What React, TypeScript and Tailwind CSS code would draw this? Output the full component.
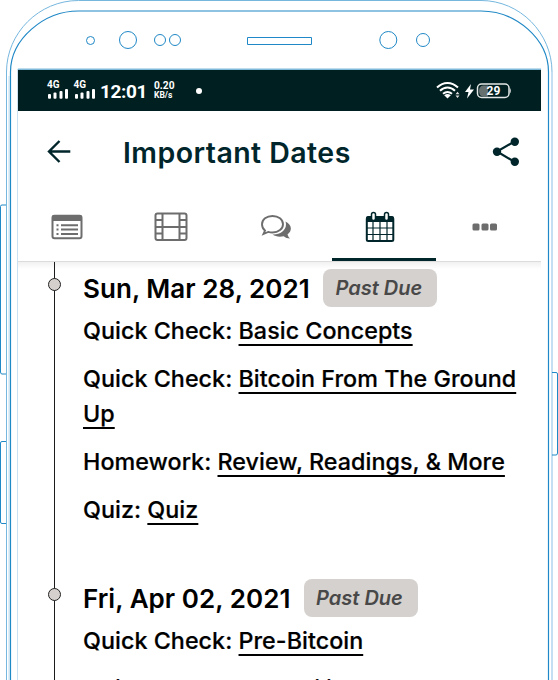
const INK = "#00262b";

function Frame() {
  return (
    <svg className="pointer-events-none absolute inset-0" width="558" height="680" viewBox="0 0 558 680" fill="none">
      <path d="M6.500 680V72C6.500 33 39 .5 78.500 .5H481C520 .5 552 33 552 72V680" stroke="#76b7de" />
      <path d="M552 72V680" stroke="#c3dff1" strokeWidth="2" />
      <path d="M9 680V76" stroke="#c3dff1" />
      <path d="M10.500 680V72C10.500 39 44 11 78.500 11H481C516 11 548.500 39 548.500 72V680" stroke="#1f88c6" strokeWidth="1.200" />
      <path d="M17.500 680V69" stroke="#c9e1f1" />
      <path d="M18 69.200H541" stroke="#7fb9da" strokeWidth="1.500" />
      <g stroke="#1f88c6" strokeWidth="1">
        <circle cx="90.500" cy="40.500" r="4" />
        <circle cx="128" cy="40" r="8.500" />
        <circle cx="160" cy="40" r="5.500" />
        <circle cx="175" cy="40" r="5.500" />
        <path d="M247.500 37.500H311.500V44.500H247.500Z" />
        <circle cx="388.300" cy="40" r="8.500" />
        <circle cx="423" cy="40" r="6.500" />
        <path d="M6 205H2Q.5 205 .5 206.500V372Q.5 374 2 374H6M6 441.500H2Q.5 441.500 .5 443V522Q.5 523.500 2 523.500H6M552 372.500H556Q557.500 372.500 557.500 374V453Q557.500 455 556 455H552" />
      </g>
    </svg>
  );
}

function Signal() {
  return (
    <div className="-mt-[2px] flex w-[26.500px] flex-col font-[Roboto]">
      <span className="h-[8px] text-[10px] font-bold leading-[8px]">4G</span>
      <svg width="22" height="10" viewBox="0 0 22 10" fill="#fff">
        <rect x="1" y="5" width="3" height="4.700" rx="1" />
        <rect x="6.500" y="3.500" width="3" height="6.200" rx="1" />
        <rect x="12.500" y="2" width="3" height="7.700" rx="1" />
        <rect x="18" y="0" width="3" height="9.700" rx="1" />
      </svg>
    </div>
  );
}

function StatusBar() {
  return (
    <div className="flex h-[41px] items-center bg-[#001f20] pl-[29px] text-white">
      <Signal />
      <Signal />
      <span className="w-[54px] whitespace-nowrap pt-[2px] font-[Roboto] text-[19px] font-bold leading-none tracking-[-0.4px]">12:01</span>
      <div className="flex w-[20px] flex-col font-[Roboto] font-bold">
        <span className="text-[10.200px] leading-[10px]">0.20</span>
        <span className="text-[8.500px] leading-[9px]">KB/s</span>
      </div>
      <span className="ml-[22px] size-[6px] rounded-full bg-white" />
      <svg className="ml-auto mr-[29px]" width="76" height="20" viewBox="0 0 76 20" fill="none" stroke="#fff">
        <path d="M1 6.500C7.500.5 15.500.5 22 6.500M4 9.800C8.500 5.500 14.500 5.500 19 9.800M7 12.800C10 10.300 13 10.300 16 12.800" strokeWidth="2" />
        <path d="M8.200 14.300Q11.500 11.800 14.800 14.300L11.500 17.500Z" fill="#fff" stroke="none" />
        <path d="M19.500 13.200L21.500 10.800L23.500 13.200ZM19.500 14.500H23.500L21.500 17Z" fill="#ddd" stroke="none" />
        <path d="M35 3L29 11H32.500L31 17.500L38 8.500H34Z" fill="#fff" stroke="none" />
        <path d="M47 4.500H52V15.500H47Q43 15 43 10Q43 5 47 4.500Z" fill="#65706f" stroke="none" />
        <rect x="41.500" y="3" width="31.500" height="13.500" rx="4" strokeWidth="1.500" stroke="#e3e7e5" />
        <path d="M73.500 6.500Q76.500 9.500 73.500 13" fill="#c3caca" stroke="none" />
        <text x="50.500" y="14" fill="#fff" stroke="none" className="font-[Roboto] text-[12px] font-bold">29</text>
      </svg>
    </div>
  );
}

function TopBar() {
  return (
    <header className="flex h-[82px] items-center pl-[28px] pr-[21px]">
      <svg width="26" height="26" viewBox="0 0 26 26" fill="none" stroke={INK} strokeWidth="2.400">
        <path d="M24.300 12.500H2.500M13.500 2L3 12.500L13.500 23" />
      </svg>
      <h1 className="ml-[51px] whitespace-nowrap pt-[3px] text-[28.500px] font-semibold tracking-[0.450px] text-[#00262b]">Important Dates</h1>
      <svg className="ml-auto" width="28" height="30" viewBox="0 0 28 30" fill={INK} stroke={INK}>
        <path d="M22.500 4.500L5 14.500L22.500 24.800" fill="none" strokeWidth="2.200" />
        <circle cx="22.800" cy="4.700" r="4.200" stroke="none" />
        <circle cx="5" cy="14.700" r="4.200" stroke="none" />
        <circle cx="22.800" cy="24.800" r="4.200" stroke="none" />
      </svg>
    </header>
  );
}

function Tabs() {
  return (
    <nav className="grid h-[69px] grid-cols-5 border-b border-[#dcdcdc] text-[#6d6d6d] [&>div]:flex [&>div]:items-center [&>div]:justify-center">
      <div className="pr-[7px]">
        <svg width="32" height="26" viewBox="0 0 32 26" fill="none" stroke="currentColor">
          <rect x="1.500" y="1.700" width="29" height="22.500" rx="2" strokeWidth="2" />
          <path d="M1 7V3Q1 1 3 1H29Q31 1 31 3V7Z" fill="currentColor" stroke="none" />
          <path d="M5.500 11.300H7.500M5.500 15.500H7.500M5.500 20H7.500M10 11.300H27M10 15.500H27M10 20H27" strokeWidth="2" />
        </svg>
      </div>
      <div className="pr-[8px]">
        <svg width="34" height="30" viewBox="0 0 34 30" fill="none" stroke="currentColor" strokeWidth="2">
          <rect x="1.500" y="1.500" width="31" height="26.500" rx="2" />
          <path d="M8.500 1.500V28M25.500 1.500V28M8.500 15H25.500M1.500 8H8.500M1.500 15H8.500M1.500 21.500H8.500M25.500 8H32.500M25.500 15H32.500M25.500 21.500H32.500" />
        </svg>
      </div>
      <div className="pr-[7px]">
        <svg width="32" height="26" viewBox="0 0 32 26" fill="none" stroke="currentColor">
          <path d="M12.500 2C18.500 2 23 5.500 23 10.200S18.500 18.500 12.500 18.500C11 18.500 9.500 18.300 8.200 17.900L3.500 20L5 16.500C3 15 2 12.800 2 10.200C2 5.500 6.500 2 12.500 2Z" strokeWidth="1.900" />
          <path d="M25.500 7.500C32 10.500 32.500 17 27.500 20.500Q28 22.500 30 24.500C27.500 24.500 25.500 23.800 23.800 22.300C19 23.200 15.500 22.500 12.500 20.500C20.500 21 28 15.500 25.500 7.500Z" fill="currentColor" stroke="none" />
        </svg>
      </div>
      <div className="border-b-[3px] border-[#00262b] pr-[8px] pt-[3px] text-[#00262b]">
        <svg width="30" height="32" viewBox="0 0 30 32" fill="none" stroke="currentColor">
          <path d="M1 11V7Q1 5 3 5H27Q29 5 29 7V11Z" fill="currentColor" stroke="none" />
          <rect x="1.800" y="6.500" width="26.500" height="23.500" rx="1.500" strokeWidth="2" />
          <path d="M8 11V30M15 11V30M22 11V30M2 17H28M2 23.500H28" strokeWidth="1.200" />
          <rect x="6.500" y="1.500" width="4" height="8" rx="2" fill="#fff" strokeWidth="1.500" />
          <rect x="19.500" y="1.500" width="4" height="8" rx="2" fill="#fff" strokeWidth="1.500" />
        </svg>
      </div>
      <div className="pr-[8px]">
        <svg width="26" height="8" viewBox="0 0 26 8" fill="currentColor">
          <rect x=".5" y=".5" width="7" height="7" rx="1.500" />
          <rect x="9.500" y=".5" width="7" height="7" rx="1.500" />
          <rect x="18" y=".5" width="7" height="7" rx="1.500" />
        </svg>
      </div>
    </nav>
  );
}

const days = [
  {
    date: "Sun, Mar 28, 2021",
    items: [
      ["Quick Check", "Basic Concepts"],
      ["Quick Check", "Bitcoin From The Ground Up"],
      ["Homework", "Review, Readings, & More"],
      ["Quiz", "Quiz"],
    ],
  },
  {
    date: "Fri, Apr 02, 2021",
    items: [
      ["Quick Check", "Pre-Bitcoin"],
      ["Quick Check", "Scalability Debate"],
    ],
  },
];

function Timeline() {
  return (
    <main className="h-[418px] overflow-hidden bg-[linear-gradient(#f1f1f1,#fff_7px)] pl-[36px]">
      <div className="border-l border-[#1b1b1b] text-black">
        {days.map((day) => (
          <section key={day.date} className="h-[310.300px] pl-[28px] pt-[6.500px]">
            <div className="flex h-[38px] items-center">
              <span className="-ml-[35px] -mt-[6px] mr-[22px] size-[13px] shrink-0 rounded-full border border-[#222] bg-[#d5d0cd]" />
              <h2 className="whitespace-nowrap pt-[2px] text-[26px] font-semibold tracking-[0.050px]">{day.date}</h2>
              <span className="ml-[13.500px] flex h-[38px] w-[114px] items-center justify-center rounded-[8px] bg-[#d5d1ce] pr-[3px] text-[20px] font-semibold italic text-[#484848]">Past Due</span>
            </div>
            <div className="mt-[6.500px] flex flex-col gap-[13px]">
              {day.items.map(([kind, title]) => (
                <p key={title} className="w-[446px] text-[23.300px] font-medium leading-[35px] tracking-[0.040px] [-webkit-text-stroke:0.200px_#000]">
                  {kind}: <a className="underline decoration-2 underline-offset-[4.500px] [text-decoration-skip-ink:none]">{title}</a>
                </p>
              ))}
            </div>
          </section>
        ))}
      </div>
    </main>
  );
}

export default function App() {
  return (
    <div className="relative h-[680px] w-[558px] overflow-hidden bg-white font-[Inter,sans-serif]">
      <div className="ml-[18px] w-[523px] pt-[70px]">
        <StatusBar />
        <TopBar />
        <Tabs />
        <Timeline />
      </div>
      <Frame />
    </div>
  );
}
